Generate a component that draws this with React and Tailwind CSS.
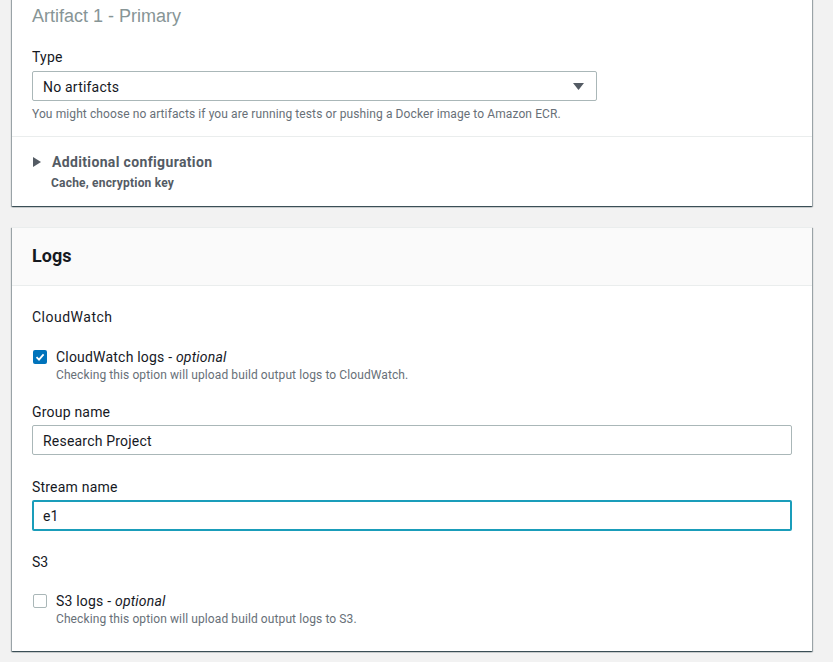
import React from 'react';

const font = { fontFamily: 'Roboto, "Liberation Sans", sans-serif' };

function Checkbox({ checked }) {
  if (checked) {
    return (
      <span className="mt-[3px] flex h-[14px] w-[14px] shrink-0 items-center justify-center rounded-[2px] bg-[#0073bb]">
        <svg width="10" height="10" viewBox="0 0 10 10">
          <path d="M1.5 5.2 L4 7.6 L8.6 2.4" fill="none" stroke="#fff" strokeWidth="1.8" />
        </svg>
      </span>
    );
  }
  return <span className="mt-[3px] h-[14px] w-[14px] shrink-0 rounded-[2px] border border-[#aab7b8] bg-white" />;
}

function CheckRow({ checked, label, help }) {
  return (
    <div className="flex gap-[9px] pl-[1px]">
      <Checkbox checked={checked} />
      <div>
        <div className="text-[14px] leading-[20px] tracking-[0.2px] text-[#16191f]">
          {label} - <i>optional</i>
        </div>
        <div className="text-[12px] leading-[16px] tracking-[0.1px] text-[#687078]">{help}</div>
      </div>
    </div>
  );
}

const cardShadow =
  'shadow-[0_1px_1px_0_rgba(0,28,36,0.5),1px_1px_1px_0_rgba(0,28,36,0.3),-1px_1px_1px_0_rgba(0,28,36,0.3)]';

export default function App() {
  return (
    <div className="min-h-[662px] w-full overflow-hidden bg-[#f2f2f2] pl-[12px]" style={font}>
      <div className="w-[800px]">
        {/* Artifacts card */}
        <div className={`-mt-[10px] border-t border-[#eaeded] bg-white ${cardShadow}`}>
          <div className="px-[20px] pt-[14px] pb-[14px]">
            <div
              className="text-[18px] leading-[22px] text-[#879596]"
              style={{ fontFamily: '"Liberation Sans", Arial, sans-serif' }}
            >
              Artifact 1 - Primary
            </div>
            <div className="mt-[20px] text-[14px] leading-[20px] tracking-[0.2px] text-[#16191f]">Type</div>
            <div className="mt-[4px] flex h-[30px] w-[565px] items-center justify-between rounded-[2px] border border-[#aab7b8] bg-white pl-[10px] pr-[12px]">
              <span className="pt-[2px] text-[14px] tracking-[0.2px] text-[#16191f]">No artifacts</span>
              <svg width="11" height="7" viewBox="0 0 11 7">
                <path d="M0 0 H11 L5.5 7 Z" fill="#545b64" />
              </svg>
            </div>
            <div className="mt-[5px] text-[12px] leading-[16px] tracking-[0.1px] text-[#687078]">
              You might choose no artifacts if you are running tests or pushing a Docker image to Amazon ECR.
            </div>
          </div>
          <div className="border-t border-[#eaeded] px-[20px] pt-[15px] pb-[15px]">
            <div className="flex items-center gap-[11px]">
              <svg width="8" height="10" viewBox="0 0 8 10" className="ml-[1px]">
                <path d="M0 0 L8 5 L0 10 Z" fill="#545b64" />
              </svg>
              <span className="text-[14px] font-bold leading-[20px] tracking-[0.35px] text-[#545b64]">
                Additional configuration
              </span>
            </div>
            <div className="mt-[3px] pl-[19px] text-[12px] font-bold leading-[16px] tracking-[0.2px] text-[#545b64]">
              Cache, encryption key
            </div>
          </div>
        </div>

        {/* Logs card */}
        <div className={`mt-[21px] border-t border-[#eaeded] bg-white ${cardShadow}`}>
          <div className="border-b border-[#eaeded] bg-[#fafafa] px-[20px] pt-[16px] pb-[17px]">
            <h2 className="text-[18px] font-bold leading-[24px] text-[#16191f]">Logs</h2>
          </div>
          <div className="px-[20px] pt-[21px] pb-[24px]">
            <div className="text-[14px] leading-[20px] tracking-[0.5px] text-[#16191f]">CloudWatch</div>
            <div className="mt-[20px]">
              <CheckRow
                checked
                label="CloudWatch logs"
                help="Checking this option will upload build output logs to CloudWatch."
              />
            </div>
            <div className="mt-[19px] text-[14px] leading-[20px] tracking-[0.2px] text-[#16191f]">Group name</div>
            <div className="mt-[3px] flex h-[30px] items-center rounded-[2px] border border-[#aab7b8] pl-[10px] pt-[2px] text-[14px] tracking-[0.2px] text-[#16191f]">
              Research Project
            </div>
            <div className="mt-[22px] text-[14px] leading-[20px] tracking-[0.2px] text-[#16191f]">Stream name</div>
            <div className="mt-[3px] flex h-[31px] items-center rounded-[2px] border-2 border-[#1a9dba] pl-[9px] pt-[2px] text-[14px] tracking-[0.2px] text-[#16191f]">
              e1
            </div>
            <div className="mt-[21px] text-[14px] leading-[20px] text-[#16191f]">S3</div>
            <div className="mt-[19px]">
              <CheckRow label="S3 logs" help="Checking this option will upload build output logs to S3." />
            </div>
          </div>
        </div>
      </div>
    </div>
  );
}
